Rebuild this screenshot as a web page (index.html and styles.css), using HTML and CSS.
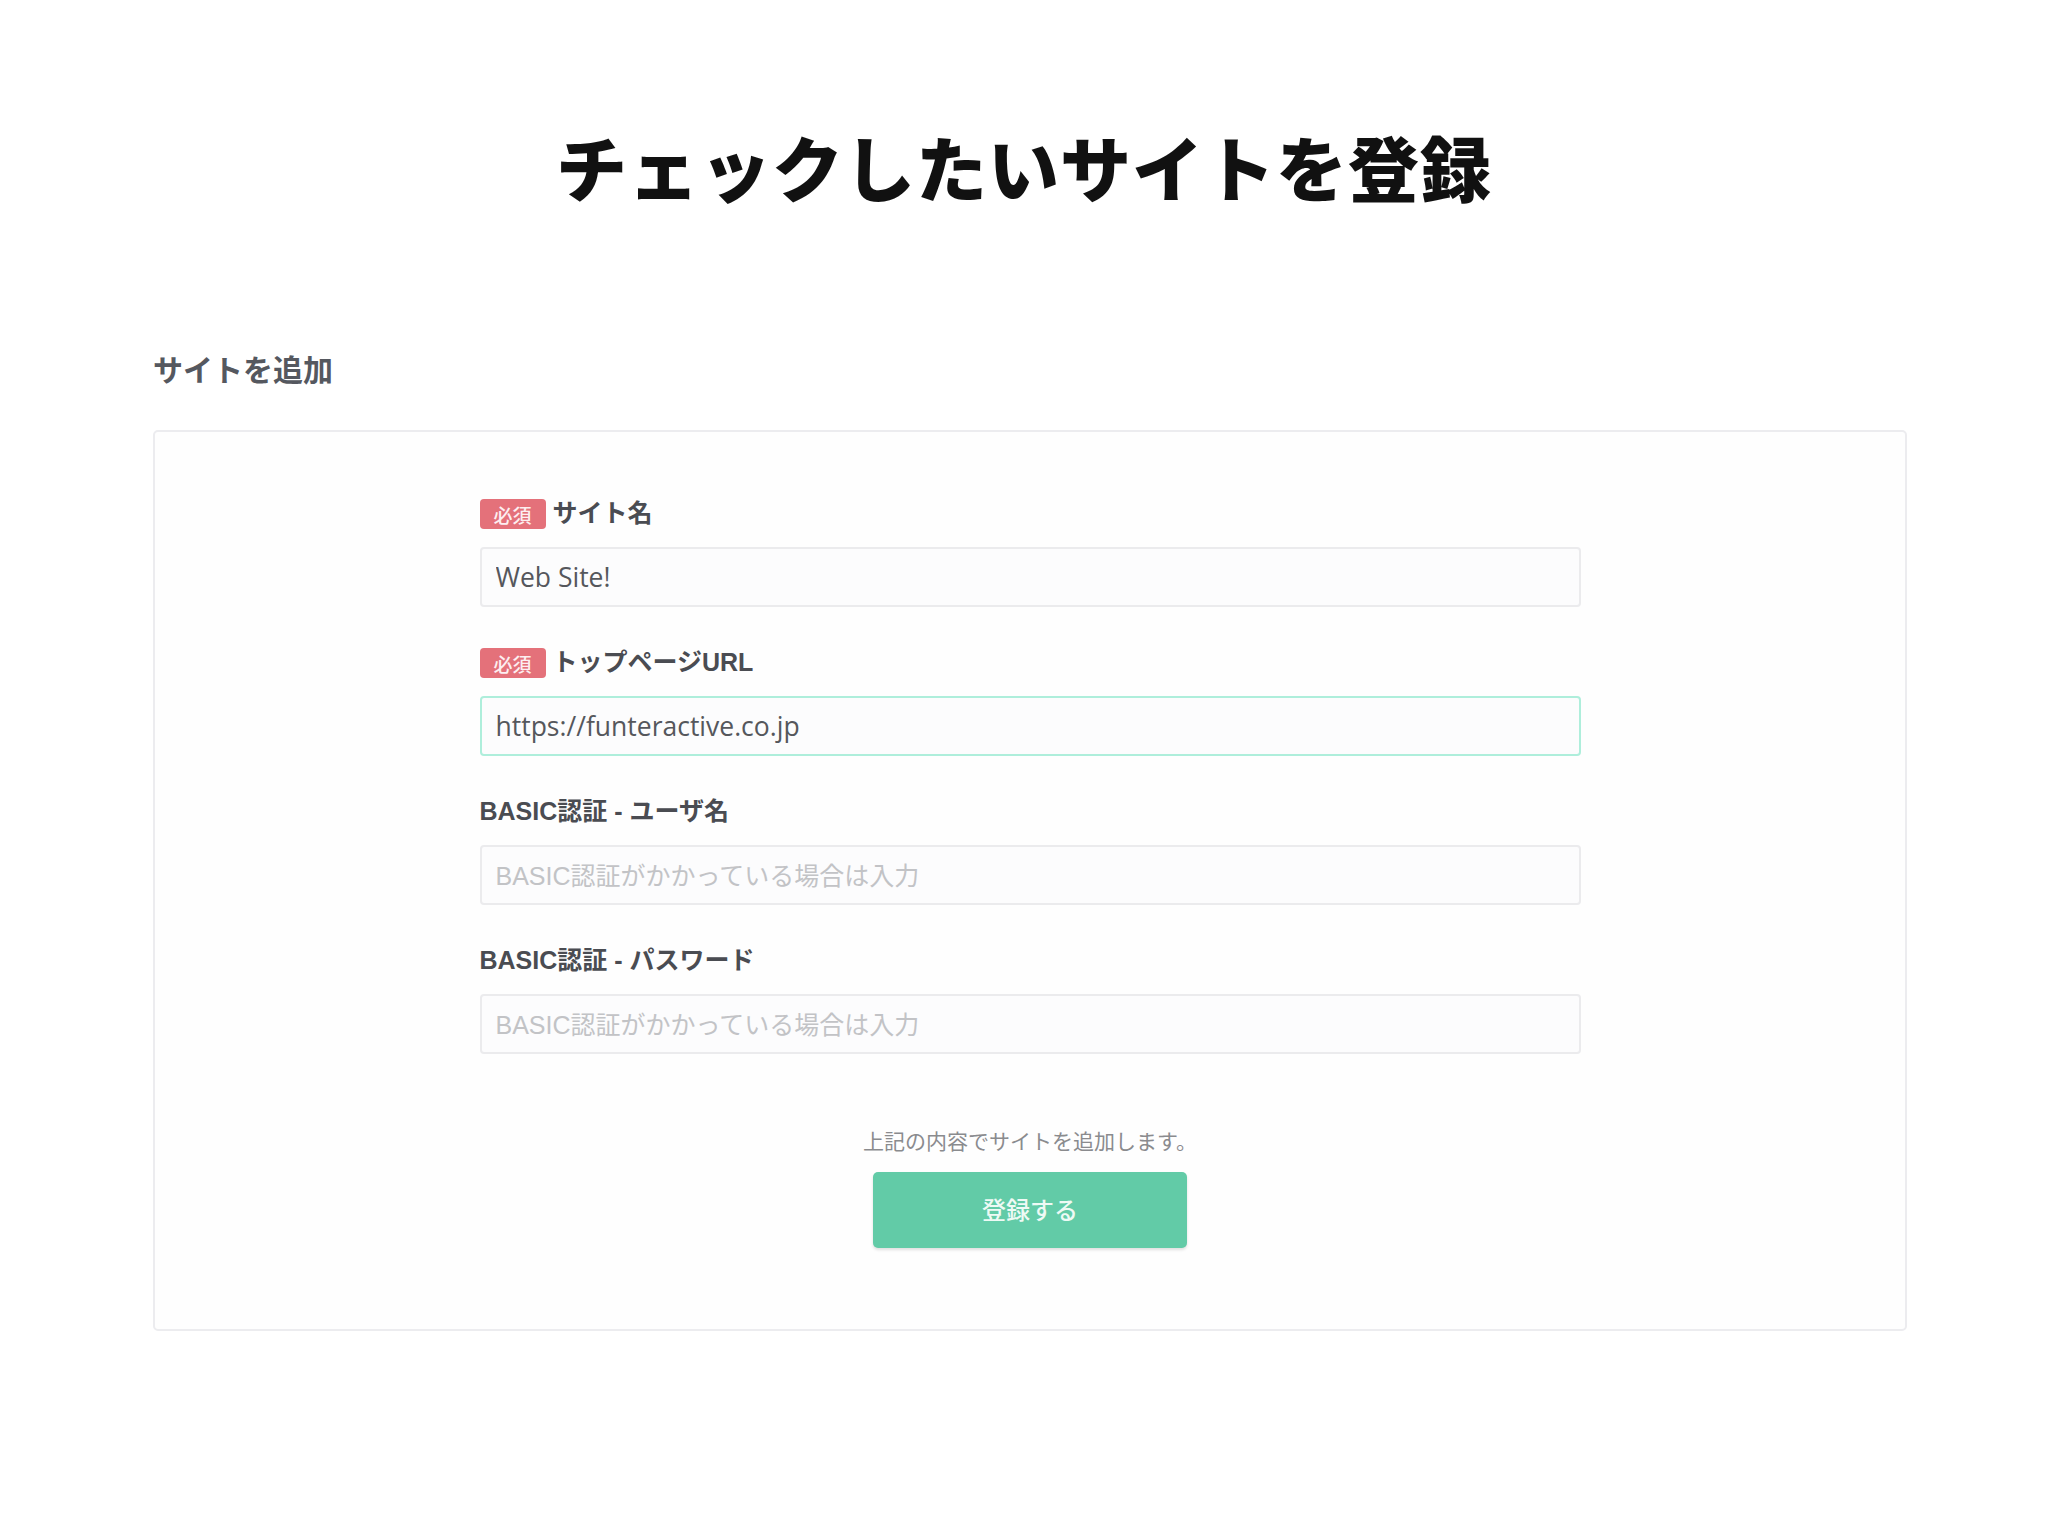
FILE: index.html
```html
<!DOCTYPE html>
<html lang="ja">
<head>
<meta charset="utf-8">
<title>チェックしたいサイトを登録</title>
<link rel="stylesheet" href="styles.css">
</head>
<body>
<main class="page">
  <h1 class="page-title">チェックしたいサイトを登録</h1>
  <section class="section">
    <h2 class="section-title">サイトを追加</h2>
    <div class="card">
      <form class="form">
        <div class="field">
          <div class="label-row"><span class="badge">必須</span><span class="label">サイト名</span></div>
          <input class="input" type="text" value="Web Site!">
        </div>
        <div class="field">
          <div class="label-row"><span class="badge">必須</span><span class="label">トップページURL</span></div>
          <input class="input input-focus" type="text" value="https://funteractive.co.jp">
        </div>
        <div class="field">
          <div class="label-row"><span class="label">BASIC認証 - ユーザ名</span></div>
          <input class="input" type="text" placeholder="BASIC認証がかかっている場合は入力">
        </div>
        <div class="field">
          <div class="label-row"><span class="label">BASIC認証 - パスワード</span></div>
          <input class="input" type="text" placeholder="BASIC認証がかかっている場合は入力">
        </div>
        <div class="submit-area">
          <p class="note">上記の内容でサイトを追加します。</p>
          <button class="button" type="button">登録する</button>
        </div>
      </form>
    </div>
  </section>
</main>
</body>
</html>
```
FILE: styles.css
```css
html, body {
  margin: 0;
  padding: 0;
  background: #ffffff;
}
body {
  font-family: "Liberation Sans", "Noto Sans CJK JP", sans-serif;
  color: #4a4c52;
}
.page {
  display: flex;
  flex-direction: column;
}
.page-title {
  margin: 127px 0 0;
  text-align: center;
  font-family: "Noto Sans CJK JP", sans-serif;
  font-weight: 900;
  font-size: 71px;
  line-height: 76px;
  letter-spacing: 1px;
  color: #111111;
}
.section {
  margin: 151px 141px 0 153px;
}
.section-title {
  margin: 0;
  font-family: "Noto Sans CJK JP", sans-serif;
  font-weight: 700;
  font-size: 30px;
  line-height: 29px;
  color: #55585f;
}
.card {
  margin-top: 47px;
  border: 2px solid #ececef;
  border-radius: 5px;
  background: #fefefe;
  padding: 67px 0 81px;
  display: flex;
  justify-content: center;
}
.form {
  width: 1101px;
  display: flex;
  flex-direction: column;
}
.field {
  display: flex;
  flex-direction: column;
  gap: 18px;
  margin-bottom: 41px;
}
.label-row {
  display: flex;
  align-items: center;
  gap: 7px;
  height: 30px;
}
.badge {
  display: inline-flex;
  align-items: center;
  justify-content: center;
  width: 66px;
  height: 30px;
  border-radius: 4px;
  background: #e4717a;
  color: #fdeef0;
  font-family: "Noto Sans CJK JP", sans-serif;
  font-weight: 500;
  font-size: 19px;
}
.label {
  font-family: "Liberation Sans", "Noto Sans CJK JP", sans-serif;
  font-weight: 700;
  font-size: 25px;
  line-height: 30px;
  margin-top: -3px;
  color: #4a4c52;
}
.input {
  box-sizing: border-box;
  width: 100%;
  height: 60px;
  border: 2px solid #ebebed;
  border-radius: 4px;
  background: #fcfcfd;
  padding: 0 14px;
  font-family: "Open Sans", "Noto Sans CJK JP", sans-serif;
  font-size: 26.5px;
  color: #55575c;
  outline: none;
}
.input::placeholder {
  font-family: "Liberation Sans", "Noto Sans CJK JP", sans-serif;
  font-size: 25px;
  color: #c2c3c6;
}
.input-focus {
  border-color: #aeeedb;
}
.submit-area {
  display: flex;
  flex-direction: column;
  align-items: center;
  margin-top: 34px;
}
.note {
  margin: 0;
  font-family: "Noto Sans CJK JP", sans-serif;
  font-size: 21px;
  line-height: 22px;
  color: #8a8b8e;
}
.button {
  margin-top: 21px;
  width: 314px;
  height: 76px;
  border: none;
  border-radius: 5px;
  background: #62cba7;
  color: #eefaf5;
  font-family: "Noto Sans CJK JP", sans-serif;
  font-weight: 500;
  font-size: 24px;
  padding-bottom: 4px;
  box-shadow: 0 2px 3px rgba(0, 0, 0, 0.12);
}
```
